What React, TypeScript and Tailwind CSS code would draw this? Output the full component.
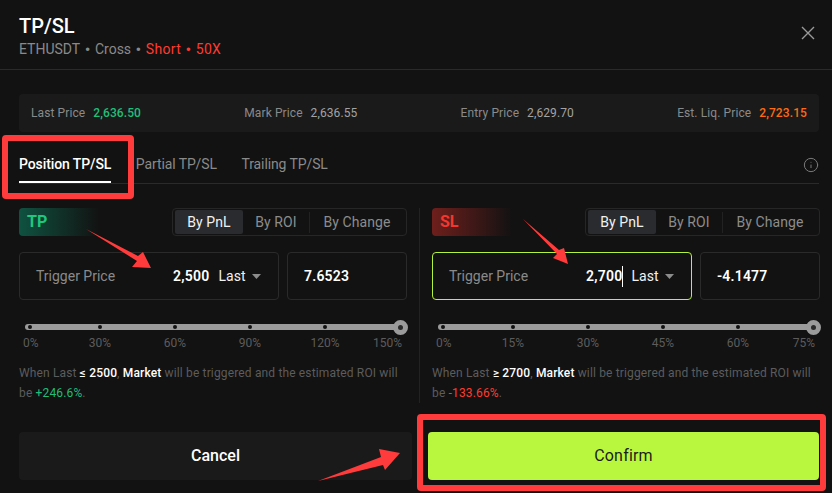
import { Info } from 'lucide-react';

const infoItems = [
  { label: 'Last Price', value: '2,636.50', color: 'text-[#1fbf78] font-medium' },
  { label: 'Mark Price', value: '2,636.55', color: 'text-[#a3a3a3]' },
  { label: 'Entry Price', value: '2,629.70', color: 'text-[#a3a3a3]' },
  { label: 'Est. Liq. Price', value: '2,723.15', color: 'text-[#ff6a13] font-medium' },
];

const tickGaps = ['ml-[3px]', 'ml-[66px]', 'ml-[71px]', 'ml-[71px]', 'ml-[71px]'];

function Slider({ labels }: { labels: string[] }) {
  return (
    <div className="mt-[24px]">
      <div className="relative ml-[6px] flex h-[6px] w-[375px] items-center rounded-full bg-[#9b9b9b]">
        {tickGaps.map((gap) => (
          <span key={gap} className={`${gap} h-[4px] w-[4px] rounded-full bg-[#111111]`} />
        ))}
        <span className="absolute right-[-8px] top-[-4.5px] h-[15px] w-[15px] rounded-full border-[5px] border-[#9b9b9b] bg-[#2a2a2a]" />
      </div>
      <div className="ml-[4px] mt-[4px] grid grid-cols-[39.5px_75px_75px_75px_75px_39.5px] text-[12px] leading-[18px] text-[#5c5c5c]">
        {labels.map((label, i) => (
          <span
            key={label}
            className={i === 0 ? 'text-left' : i === 5 ? 'whitespace-nowrap text-right' : 'text-center'}
          >
            {label}
          </span>
        ))}
      </div>
    </div>
  );
}

interface SideProps {
  tag: string;
  badge: string;
  tagColor: string;
  price: string;
  amount: string;
  focused?: boolean;
  labels: string[];
  sign: string;
  level: string;
  roi: string;
  roiColor: string;
}

function Side({ tag, badge, tagColor, price, amount, focused, labels, sign, level, roi, roiColor }: SideProps) {
  return (
    <div className="w-[388px]">
      <div className="flex items-center justify-between">
        <div className={`flex h-[28px] w-[80px] items-center rounded-l-[4px] bg-gradient-to-r ${badge} to-transparent pl-[8px] text-[16px] font-bold ${tagColor}`}>
          {tag}
        </div>
        <div className="flex h-[28px] w-[235px] items-center rounded-[4px] border border-[#262626] pl-[2px] text-[14px] tracking-[0.1px] text-[#8c8c8c]">
          <span className="flex h-[24px] w-[68px] items-center justify-center rounded-[2px] bg-[#2a2b2e] text-[#f2f2f2]">By PnL</span>
          <span className="flex w-[67px] justify-center border-r border-[#222222]">By ROI</span>
          <span className="flex flex-1 justify-center pr-[2px]">By Change</span>
        </div>
      </div>

      <div className="mt-[16px] flex gap-[8px]">
        <div className={`flex h-[48px] w-[260px] items-center rounded-[4px] border pl-[16px] text-[14px] ${focused ? 'border-[#b4f03c]' : 'border-[#2a2a2a]'}`}>
          <span className="text-[#8a8a8a]">Trigger Price</span>
          <span className={`ml-[58px] flex items-center font-semibold tracking-[0.2px] text-white ${focused ? 'border-r border-white' : ''}`}>{price}</span>
          <span className={`${focused ? 'ml-[8px]' : 'ml-[9px]'} tracking-[0.1px] text-[#f2f2f2]`}>Last</span>
          <svg className="ml-[6px]" width="9" height="5" viewBox="0 0 9 5">
            <path d="M0 0h9L4.5 5z" fill="#8c8c8c" />
          </svg>
        </div>
        <div className="flex h-[48px] w-[120px] items-center rounded-[4px] border border-[#2a2a2a] pl-[16px] text-[14px] font-semibold tracking-[0.2px] text-white">
          {amount}
        </div>
      </div>

      <Slider labels={labels} />

      <p className="mt-[11px] text-[12px] leading-[20px] tracking-[0.15px] text-[#5c5c5c]">
        When Last <span className="font-medium text-white">{sign} {level}</span>, <span className="font-medium text-white">Market</span> will be triggered and the estimated ROI will be <span className={roiColor}>{roi}</span>.
      </p>
    </div>
  );
}

export default function App() {
  return (
    <div className="relative flex h-[493px] w-[832px] flex-col overflow-hidden bg-[#121212] font-['Roboto',sans-serif]">
      <header className="relative h-[70px] border-b border-[#2a2a2a] px-[19px] pt-[14px]">
        <h1 className="text-[20px] font-medium leading-[24px] text-white">TP/SL</h1>
        <p className="mt-[1px] flex text-[14px] leading-[20px] text-[#8a8a8a]">
          <span>ETHUSDT</span>
          <span className="mx-[4.5px] text-[17px]">•</span>
          <span>Cross</span>
          <span className="mx-[4.5px] text-[17px]">•</span>
          <span className="tracking-[0.3px] text-[#ff3b30]">Short</span>
          <span className="mx-[4.5px] text-[17px] text-[#ff3b30]">•</span>
          <span className="tracking-[0.3px] text-[#ff3b30]">50X</span>
        </p>
        <svg className="absolute right-[17px] top-[26px]" width="14" height="14" viewBox="0 0 14 14" fill="none" stroke="#9a9a9a" strokeWidth="1.4">
          <path d="M1 1l12 12M13 1L1 13" />
        </svg>
      </header>

      <div className="ml-[19px] mr-[13px] mt-[24px] flex h-[38px] items-center justify-between rounded-[4px] bg-[#1a1a1a] px-[12px] text-[12px] tracking-[0.1px]">
        {infoItems.map((item) => (
          <div key={item.label} className="flex gap-[8px]">
            <span className="text-[#8a8a8a]">{item.label}</span>
            <span className={item.color}>{item.value}</span>
          </div>
        ))}
      </div>

      <nav className="ml-[19px] mr-[13px] flex h-[52px] items-end gap-[24.5px] border-b border-[#2a2a2a] text-[14px] tracking-[-0.1px] text-[#8a8a8a]">
        <span className="border-b-2 border-white pb-[7px] font-medium leading-[20px] text-white">Position TP/SL</span>
        <span className="pb-[9px] leading-[20px]">Partial TP/SL</span>
        <span className="pb-[9px] leading-[20px]">Trailing TP/SL</span>
        <Info className="mb-[10px] ml-auto text-[#7a7a7a]" size={16} strokeWidth={1.5} />
      </nav>

      <div className="ml-[19px] flex h-[221px] gap-[12px]">
        <div className="pt-[24px]">
          <Side
            tag="TP"
            badge="from-[#0f5240]"
            tagColor="text-[#1fc77e]"
            price="2,500"
            amount="7.6523"
            labels={['0%', '30%', '60%', '90%', '120%', '150%']}
            sign="≤"
            level="2500"
            roi="+246.6%"
            roiColor="text-[#1fbf78]"
          />
        </div>
        <div className="mt-[24px] mb-[2px] w-px bg-[#222222]" />
        <div className="pt-[24px]">
          <Side
            tag="SL"
            badge="from-[#6e1f1c]"
            tagColor="text-[#f5362f]"
            price="2,700"
            amount="-4.1477"
            focused
            labels={['0%', '15%', '30%', '45%', '60%', '75%']}
            sign="≥"
            level="2700"
            roi="-133.66%"
            roiColor="text-[#ff3b30]"
          />
        </div>
      </div>

      <footer className="ml-[19px] mr-[13px] mt-[27px] flex justify-between">
        <button className="h-[48px] w-[393px] rounded-[4px] bg-[#1a1a1a] text-[16px] font-medium text-white">Cancel</button>
        <button className="h-[48px] w-[391px] rounded-[4px] bg-[#b9f73e] text-[16px] tracking-[0.2px] text-[#1c1c1c]">Confirm</button>
      </footer>

      {/* red annotations painted on top of the screenshot */}
      <div className="absolute left-[2px] top-[135px] h-[64px] w-[132px] rounded-[4px] border-[6px] border-[#ff3b3b]" />
      <div className="absolute left-[417px] top-[414px] h-[77px] w-[409px] rounded-[4px] border-[6px] border-[#ff3b3b]" />
      <svg className="absolute left-0 top-0" width="832" height="493" viewBox="0 0 832 493" fill="#ff3b3b">
        <path d="M86 229L138 256L143 252L151 268L132 267L137 261Z" />
        <path d="M523 219L559 250L564 248L568 264L553 258L557 254Z" />
        <path d="M318 481L381 457L379 449L400 453L385 470L383 465Z" />
      </svg>
    </div>
  );
}
